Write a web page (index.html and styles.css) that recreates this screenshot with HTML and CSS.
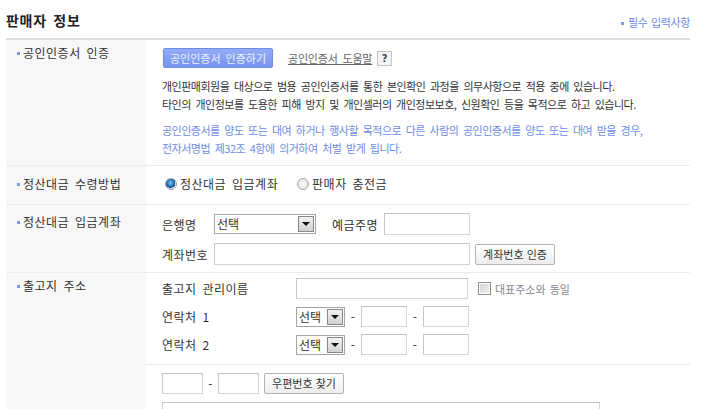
FILE: index.html
```html
<!DOCTYPE html>
<html lang="ko">
<head>
    <meta charset="UTF-8">
    <title>판매자 정보</title>
    <link rel="stylesheet" href="styles.css">
</head>
<body>
<div class="page">
    <div class="page-head">
        <h2 class="page-title">판매자 정보</h2>
        <span class="req-note"><i class="dot"></i>필수 입력사항</span>
    </div>

    <table class="seller-form">
        <tr class="row-cert">
            <th><i class="dot"></i>공인인증서 인증</th>
            <td>
                <div class="cert-actions">
                    <button class="btn-blue">공인인증서 인증하기</button>
                    <a class="help-link" href="#">공인인증서 도움말</a>
                    <span class="help-q">?</span>
                </div>
                <p class="notice">개인판매회원을 대상으로 범용 공인인증서를 통한 본인확인 과정을 의무사항으로 적용 중에 있습니다.<br>타인의 개인정보를 도용한 피해 방지 및 개인셀러의 개인정보보호, 신원확인 등을 목적으로 하고 있습니다.</p>
                <p class="notice blue">공인인증서를 양도 또는 대여 하거나 행사할 목적으로 다른 사람의 공인인증서를 양도 또는 대여 받을 경우,<br>전자서명법 제32조 4항에 의거하여 처벌 받게 됩니다.</p>
            </td>
        </tr>
        <tr class="row-pay">
            <th><i class="dot"></i>정산대금 수령방법</th>
            <td>
                <label class="radio-item"><span class="radio on"></span>정산대금 입금계좌</label>
                <label class="radio-item"><span class="radio"></span>판매자 충전금</label>
            </td>
        </tr>
        <tr class="row-bank">
            <th><i class="dot"></i>정산대금 입금계좌</th>
            <td>
                <div class="line">
                    <span class="sub-label short">은행명</span>
                    <span class="fake-select bank"><span class="sel-text">선택</span><span class="sel-arrow"></span></span>
                    <span class="sub-label owner">예금주명</span>
                    <input class="text-input owner-input" type="text">
                </div>
                <div class="line">
                    <span class="sub-label short">계좌번호</span>
                    <input class="text-input account-input" type="text">
                    <button class="btn-gray">계좌번호 인증</button>
                </div>
            </td>
        </tr>
        <tr class="row-addr">
            <th><i class="dot"></i>출고지 주소</th>
            <td>
                <div class="addr-top">
                    <div class="line">
                        <span class="sub-label wide">출고지 관리이름</span>
                        <input class="text-input name-input" type="text">
                        <label class="check-item"><span class="checkbox"></span>대표주소와 동일</label>
                    </div>
                    <div class="line">
                        <span class="sub-label wide">연락처 1</span>
                        <span class="fake-select phone"><span class="sel-text">선택</span><span class="sel-arrow"></span></span>
                        <span class="dash">-</span>
                        <input class="text-input phone-input" type="text">
                        <span class="dash">-</span>
                        <input class="text-input phone-input" type="text">
                    </div>
                    <div class="line">
                        <span class="sub-label wide">연락처 2</span>
                        <span class="fake-select phone"><span class="sel-text">선택</span><span class="sel-arrow"></span></span>
                        <span class="dash">-</span>
                        <input class="text-input phone-input" type="text">
                        <span class="dash">-</span>
                        <input class="text-input phone-input" type="text">
                    </div>
                </div>
                <div class="addr-zip">
                    <div class="line">
                        <input class="text-input zip-input" type="text">
                        <span class="dash">-</span>
                        <input class="text-input zip-input" type="text">
                        <button class="btn-gray">우편번호 찾기</button>
                    </div>
                    <input class="text-input addr-input" type="text">
                </div>
            </td>
        </tr>
    </table>
</div>
</body>
</html>
```

FILE: styles.css
```css
body {
    margin: 0;
    font-family: "Noto Sans CJK KR", "Noto Sans", sans-serif;
    font-size: 12px;
    letter-spacing: 0.5px;
    word-spacing: 2px;
    color: #333;
    background: #fff;
}

.page {
    width: 684px;
    margin-left: 6px;
}

.page-head {
    display: flex;
    justify-content: space-between;
    align-items: center;
    height: 38px;
    border-bottom: 2px solid #dedede;
}

.page-title {
    margin: 0;
    padding-top: 2px;
    font-size: 14px;
    font-weight: bold;
    letter-spacing: 0.7px;
    color: #222;
}

.req-note {
    padding-top: 5px;
    font-size: 11px;
    letter-spacing: -0.4px;
    word-spacing: 1px;
    color: #6d8be6;
}

.dot {
    display: inline-block;
    width: 3px;
    height: 3px;
    margin-right: 4px;
    vertical-align: middle;
    background: #7c97ea;
}

.seller-form {
    width: 100%;
    border-collapse: collapse;
}

.seller-form tr {
    border-bottom: 1px solid #ebebeb;
}

.seller-form th {
    width: 129px;
    padding: 9px 0 0 11px;
    vertical-align: top;
    text-align: left;
    font-weight: normal;
    line-height: 16px;
    background: #f7f7f7;
    white-space: nowrap;
}

.seller-form th .dot {
    margin-right: 3px;
    margin-top: -2px;
}

.seller-form td {
    padding: 8px 0 7px 16px;
    vertical-align: top;
}

/* 공인인증서 */
.row-cert th {
    padding-top: 5px;
}

.cert-actions {
    display: flex;
    align-items: center;
    height: 20px;
}

.btn-blue {
    height: 20px;
    width: 110px;
    padding: 0;
    margin: 0 15px 0 1px;
    border: 1px solid #6f8be4;
    border-radius: 2px;
    background: linear-gradient(#93acf7, #7893ee);
    color: #eef2ff;
    font-family: inherit;
    font-size: 11px;
    letter-spacing: 0;
    word-spacing: 2px;
}

.help-link {
    color: #666;
    font-size: 11px;
    letter-spacing: -0.2px;
    word-spacing: 2px;
    text-decoration: underline;
}

.help-q {
    display: inline-block;
    width: 13px;
    height: 13px;
    margin-left: 5px;
    border: 1px solid #c4c4c4;
    background: #f4f4f4;
    font-family: "DejaVu Sans", sans-serif;
    font-size: 10px;
    font-weight: bold;
    letter-spacing: 0;
    line-height: 13px;
    text-align: center;
    color: #444;
}

.notice {
    margin: 9px 0 0;
    font-size: 11px;
    line-height: 18px;
    letter-spacing: -0.5px;
    word-spacing: 2px;
    color: #333;
}

.notice.blue {
    margin-top: 8px;
    margin-bottom: 1px;
    color: #6d8ce8;
}

/* 수령방법 */
.row-pay th {
    padding-top: 10px;
}

.row-pay td {
    padding: 9px 0 10px 16px;
    line-height: 18px;
}

.radio-item {
    display: inline-flex;
    align-items: center;
    margin-right: 10px;
    font-size: 12px;
}

.radio {
    display: inline-block;
    box-sizing: border-box;
    width: 12px;
    height: 12px;
    margin: 0 3px 0 3px;
    border: 1px solid #a9a9a9;
    border-radius: 50%;
    background: radial-gradient(circle, #fafafa 0, #dcdcdc 100%);
}

.radio.on {
    background: radial-gradient(circle at 45% 40%, #7fc4f2 0, #1f6fb6 45%, #0d4a86 58%, #e9e9e9 62%, #d4d4d4 100%);
}

/* common rows */
.line {
    display: flex;
    align-items: center;
    height: 22px;
}

.line + .line {
    margin-top: 8px;
}

.sub-label {
    flex: none;
    white-space: nowrap;
}

.sub-label.short {
    width: 52px;
}

.sub-label.owner {
    margin-left: 16px;
    width: 52px;
}

.sub-label.wide {
    width: 134px;
}

.text-input {
    box-sizing: border-box;
    height: 21px;
    margin: 0;
    padding: 0 3px;
    border: 1px solid #d4d4d4;
    border-top-color: #c2c2c2;
    border-left-color: #c8c8c8;
    font-family: inherit;
    font-size: 12px;
}

.owner-input {
    width: 86px;
    height: 22px;
}

.account-input {
    width: 256px;
    height: 22px;
}

.fake-select {
    display: inline-flex;
    align-items: center;
    box-sizing: border-box;
    height: 20px;
    border: 1px solid #a5a5a5;
    background: #fff;
}

.fake-select.bank {
    width: 102px;
}

.fake-select.phone {
    width: 49px;
}

.sel-text {
    flex: 1;
    padding-left: 2px;
    font-size: 12px;
    letter-spacing: 0;
    line-height: 16px;
}

.sel-arrow {
    position: relative;
    box-sizing: border-box;
    width: 16px;
    height: 16px;
    margin-right: 1px;
    border: 1px solid #888;
    background: linear-gradient(#f2f2f2, #d2d2d2);
}

.sel-arrow::after {
    content: "";
    position: absolute;
    left: 3px;
    top: 5px;
    border-left: 4px solid transparent;
    border-right: 4px solid transparent;
    border-top: 4px solid #111;
}

.btn-gray {
    height: 21px;
    margin: 0 0 0 5px;
    padding: 0 6px;
    border: 1px solid #b3b3b3;
    border-radius: 2px;
    background: linear-gradient(#ffffff, #ececec);
    font-family: inherit;
    font-size: 11px;
    letter-spacing: 0;
    word-spacing: 0;
    color: #333;
}

.row-bank .btn-gray {
    width: 80px;
}

/* 출고지 */
.row-addr th {
    padding-top: 5px;
}

.row-addr td {
    padding: 0;
}

.addr-top {
    padding: 5px 0 9px 16px;
    border-bottom: 1px solid #e6e6e6;
}

.addr-top .line {
    height: 21px;
}

.addr-top .line + .line {
    margin-top: 7px;
}

.name-input {
    width: 172px;
}

.check-item {
    display: inline-flex;
    align-items: center;
    margin-left: 10px;
    font-size: 11px;
    letter-spacing: 0;
    word-spacing: 1px;
    color: #888;
}

.checkbox {
    box-sizing: border-box;
    width: 13px;
    height: 13px;
    margin-right: 4px;
    border: 1px solid #8f8f8f;
    box-shadow: inset 0 0 0 1px #fff;
    background: linear-gradient(135deg, #d0d0d0, #f2f2f2);
}

.dash {
    width: 16px;
    text-align: center;
    flex: none;
}

.phone-input {
    width: 46px;
}

.addr-zip {
    padding: 7px 0 0 16px;
}

.zip-input {
    width: 41px;
    height: 21px;
}

.addr-zip .dash {
    width: 15px;
}

.addr-zip .btn-gray {
    width: 80px;
}

.addr-input {
    display: block;
    width: 438px;
    margin-top: 8px;
}
```
